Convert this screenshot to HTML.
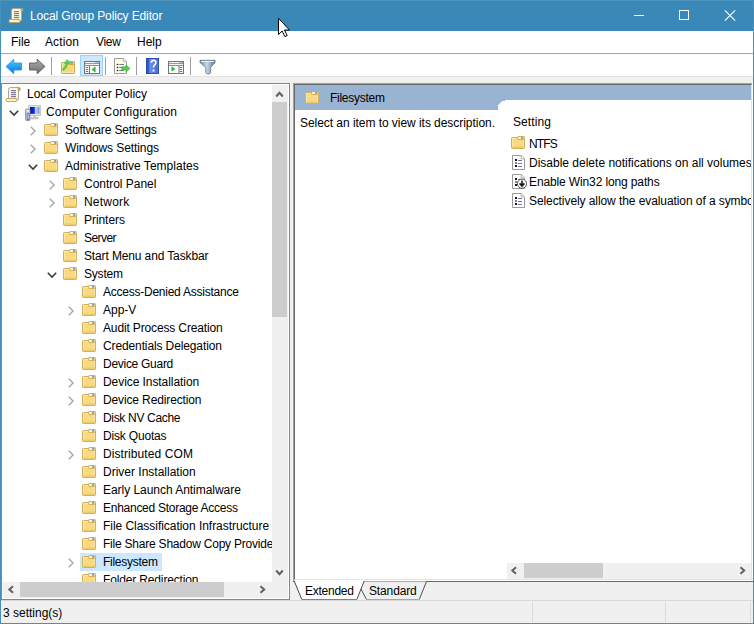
<!DOCTYPE html><html><head><meta charset="utf-8"><style>
*{box-sizing:border-box}
html,body{margin:0;padding:0}
body{width:754px;height:624px;position:relative;overflow:hidden;background:#F0F0F0;font-family:"Liberation Sans",sans-serif;font-size:12px;color:#000}
.a{position:absolute}
.t{position:absolute;white-space:nowrap;line-height:18px;height:18px}
svg{position:absolute;overflow:visible}
</style></head><body>
<div class="a" style="left:0px;top:0px;width:754px;height:31px;background:#3A88B7;"></div>
<div class="a" style="left:0px;top:0px;width:754px;height:1px;background:#4C94C0;"></div>
<div class="a" style="left:0px;top:0px;width:1px;height:624px;background:#4890BC;"></div>
<div class="a" style="left:753px;top:0px;width:1px;height:624px;background:#4890BC;"></div>
<div class="a" style="left:0px;top:623px;width:754px;height:1px;background:#4890BC;"></div>
<svg style="left:8px;top:8px" width="16" height="16" viewBox="0 0 16 16"><g>
<path d="M3.5 2.5 Q3.5 0.5 5.5 0.5 H13.5 Q15.5 0.5 15 2.5 L13.5 3.5 V12.5 H3.5 Z" fill="#FDF6D8" stroke="#A8A8A8"/>
<path d="M12.5 0.8 Q15.5 0.5 15.2 2.8 Q14.5 4 13 3.5" fill="#D4B45C" stroke="#A48A3A" stroke-width="0.8"/>
<rect x="6" y="3" width="5" height="1.2" fill="#7C7CA4"/>
<rect x="6" y="5" width="5" height="1.2" fill="#7C7CA4"/>
<rect x="6" y="7" width="5" height="1.2" fill="#7C7CA4"/>
<rect x="6" y="9" width="5" height="1.2" fill="#7C7CA4"/>
<path d="M1.5 11.5 Q0.2 12.8 1.5 14.5 H11.5 Q13 13 11.5 11.5 Z" fill="#F6EBC2" stroke="#C2A864"/>
<rect x="2.5" y="12.5" width="7" height="1" fill="#FFF8D0"/>
</g></svg>
<div class="t" style="left:30px;top:7px;letter-spacing:-0.125px;color:#fff">Local Group Policy Editor</div>
<div class="a" style="left:634px;top:15px;width:10px;height:1px;background:#fff;"></div>
<div class="a" style="left:679px;top:10px;width:10px;height:10px;border:1px solid #fff"></div>
<svg style="left:724px;top:10px" width="12" height="11" viewBox="0 0 12 11"><path d="M0.8 0.3 L11.2 10.7 M11.2 0.3 L0.8 10.7" stroke="#fff" stroke-width="1.1" fill="none"/></svg>
<div class="a" style="left:1px;top:31px;width:752px;height:22px;background:#fff;"></div>
<div class="a" style="left:1px;top:53px;width:752px;height:1px;background:#ABABAB;"></div>
<div class="t" style="left:11px;top:33px;letter-spacing:-0.033px;">File</div>
<div class="t" style="left:45px;top:33px;letter-spacing:0.100px;">Action</div>
<div class="t" style="left:96px;top:33px;letter-spacing:-0.300px;">View</div>
<div class="t" style="left:137px;top:33px;">Help</div>
<div class="a" style="left:1px;top:54px;width:752px;height:22px;background:#fff;"></div>
<div class="a" style="left:1px;top:54px;width:752px;height:1px;background:#F7F7FC;"></div>
<div class="a" style="left:1px;top:76px;width:752px;height:1px;background:#E3E3E3;"></div>
<svg style="left:0px;top:54px" width="230" height="22" viewBox="0 54 230 22"><defs><linearGradient id="gb" x1="0" y1="0" x2="0" y2="1"><stop offset="0" stop-color="#6BCBFB"/><stop offset="0.45" stop-color="#2AA5F2"/><stop offset="1" stop-color="#0B6FCC"/></linearGradient><linearGradient id="gg" x1="0" y1="0" x2="0" y2="1"><stop offset="0" stop-color="#B0B0B0"/><stop offset="0.5" stop-color="#8E8E8E"/><stop offset="1" stop-color="#707070"/></linearGradient><linearGradient id="gf" x1="0" y1="0" x2="1" y2="0"><stop offset="0" stop-color="#6F8699"/><stop offset="0.45" stop-color="#C9DAE6"/><stop offset="1" stop-color="#5E7487"/></linearGradient><linearGradient id="gh" x1="0" y1="0" x2="1" y2="0"><stop offset="0" stop-color="#6E8FE8"/><stop offset="1" stop-color="#4A6CD6"/></linearGradient></defs><path d="M6 66.5 L13.8 59.2 V63 H21.5 V70 H13.8 V73.8 Z" fill="url(#gb)" stroke="#3A93E0" stroke-width="0.9" stroke-linejoin="round"/><path d="M45 66.5 L37.2 59.2 V63 H29.5 V70 H37.2 V73.8 Z" fill="url(#gg)" stroke="#5A5A5A" stroke-width="0.9" stroke-linejoin="round"/><rect x="51" y="57" width="1" height="18" fill="#A0A0A0"/><rect x="105" y="57" width="1" height="18" fill="#A0A0A0"/><rect x="136" y="57" width="1" height="18" fill="#A0A0A0"/><rect x="190" y="57" width="1" height="18" fill="#A0A0A0"/><rect x="61.5" y="62.5" width="13" height="11" rx="0.8" fill="#F7D77C" stroke="#CDA64E"/><rect x="62.5" y="63.5" width="11" height="9" fill="none" stroke="#FBE7A4" stroke-width="0.9"/><rect x="68.5" y="61.5" width="6" height="3" rx="0.8" fill="#F7D77C" stroke="#CDA64E"/><rect x="70.5" y="62.3" width="2.5" height="1.2" fill="#4A90E2"/><path d="M63.4 69.4 Q66.6 66.8 67.3 62.8" fill="none" stroke="#4ED24E" stroke-width="2.6" stroke-linecap="round"/><path d="M67.1 59.4 L70.6 63.2 L64.3 63.4 Z" fill="#56DA56" stroke="#34B034" stroke-width="0.5"/><rect x="80.5" y="55.5" width="22" height="20" fill="#CCE8FF" stroke="#99D1FF"/><rect x="84.5" y="61.5" width="15" height="12" fill="#FFFFFF" stroke="#6F757E"/><rect x="85" y="62" width="14" height="1.2" fill="#F4F4F4"/><rect x="85" y="63.2" width="14" height="0.9" fill="#7E848C"/><rect x="85" y="64.1" width="14" height="1" fill="#F4F4F4"/><rect x="85" y="65.1" width="14" height="0.9" fill="#7E848C"/><rect x="95.5" y="62" width="1" height="1.2" fill="#7E848C"/><rect x="97.5" y="62" width="1" height="1.2" fill="#7E848C"/><rect x="89" y="66" width="1" height="7.5" fill="#6F757E"/><rect x="85.8" y="67" width="2.4" height="1" fill="#3A78C8"/><rect x="85.8" y="69" width="2.4" height="1" fill="#3A78C8"/><rect x="85.8" y="71" width="2.4" height="1" fill="#3A78C8"/><path d="M91.9 69.5 L95.2 66.9 V72.1 Z" fill="#3CB83C" stroke="#2FA52F" stroke-width="0.6" stroke-linejoin="round"/><rect x="96.5" y="66" width="0.8" height="7" fill="#EDEDED"/><path d="M114.5 58.5 H123.3 L126.5 61.7 V73.5 H114.5 Z" fill="#FFF8E2" stroke="#9C9C9C"/><path d="M123.3 58.5 V61.7 H126.5" fill="#F0F0F0" stroke="#B4B4B4" stroke-width="0.8"/><circle cx="117.5" cy="64.5" r="0.8" fill="#202020"/><circle cx="117.5" cy="67.5" r="0.8" fill="#202020"/><circle cx="117.5" cy="70.5" r="0.8" fill="#202020"/><rect x="119.2" y="64" width="4.8" height="1" fill="#7A78A8"/><rect x="119.2" y="67" width="4.8" height="1" fill="#7A78A8"/><rect x="119.2" y="70" width="4.8" height="1" fill="#7A78A8"/><path d="M121.8 66.8 H126 V64.8 L130 68.4 L126 72.2 V69.9 H121.8 Z" fill="#52D052" stroke="#36AF36" stroke-width="0.6" stroke-linejoin="round"/><rect x="146" y="58" width="13" height="16" fill="#2242A8"/><rect x="146.6" y="58.6" width="2.6" height="14.8" fill="#3358C8"/><rect x="149.2" y="58.8" width="9.2" height="14.4" fill="url(#gh)"/><path d="M151.2 62.7 Q151.3 60.4 153.6 60.4 Q155.9 60.4 155.9 62.5 Q155.9 63.9 154.6 64.8 Q153.5 65.6 153.5 67.6" fill="none" stroke="#FFFFFF" stroke-width="1.6"/><rect x="152.6" y="69.6" width="1.9" height="1.9" fill="#FFFFFF"/><rect x="168.5" y="61.5" width="15" height="12" fill="#FFFFFF" stroke="#6F757E"/><rect x="169" y="62" width="14" height="1.2" fill="#F4F4F4"/><rect x="169" y="63.2" width="14" height="0.9" fill="#7E848C"/><rect x="169" y="64.1" width="14" height="1" fill="#F4F4F4"/><rect x="169" y="65.1" width="14" height="0.9" fill="#7E848C"/><rect x="179.5" y="62" width="1" height="1.2" fill="#7E848C"/><rect x="181.5" y="62" width="1" height="1.2" fill="#7E848C"/><rect x="178.5" y="66" width="1" height="7.5" fill="#6F757E"/><rect x="179.8" y="67" width="2.4" height="1" fill="#3A78C8"/><rect x="179.8" y="69" width="2.4" height="1" fill="#3A78C8"/><rect x="179.8" y="71" width="2.4" height="1" fill="#3A78C8"/><path d="M171.8 66.8 L175 69 L171.8 71.1 Z" fill="#3CB83C" stroke="#2FA52F" stroke-width="0.6" stroke-linejoin="round"/><path d="M200 60.3 H215 V62.6 L210.6 67.6 V72.6 Q210.6 73.9 208.3 73.9 Q205.8 73.9 205.8 72.6 V67.6 L200 62.6 Z" fill="url(#gf)" stroke="#5F7488" stroke-width="0.8" stroke-linejoin="round"/><rect x="201" y="61" width="13" height="1" fill="#E8F2F8"/></svg>
<div class="a" style="left:1px;top:83px;width:289px;height:517px;border:1px solid #828790;background:#fff"></div>
<div class="a" style="left:3px;top:85px;width:269px;height:497px;overflow:hidden">
<svg style="left:2px;top:2px" width="16" height="16" viewBox="0 0 16 16"><g>
<path d="M3.5 2.5 Q3.5 0.5 5.5 0.5 H13.5 Q15.5 0.5 15 2.5 L13.5 3.5 V12.5 H3.5 Z" fill="#FDF6D8" stroke="#A8A8A8"/>
<path d="M12.5 0.8 Q15.5 0.5 15.2 2.8 Q14.5 4 13 3.5" fill="#D4B45C" stroke="#A48A3A" stroke-width="0.8"/>
<rect x="6" y="3" width="5" height="1.2" fill="#7C7CA4"/>
<rect x="6" y="5" width="5" height="1.2" fill="#7C7CA4"/>
<rect x="6" y="7" width="5" height="1.2" fill="#7C7CA4"/>
<rect x="6" y="9" width="5" height="1.2" fill="#7C7CA4"/>
<path d="M1.5 11.5 Q0.2 12.8 1.5 14.5 H11.5 Q13 13 11.5 11.5 Z" fill="#F6EBC2" stroke="#C2A864"/>
<rect x="2.5" y="12.5" width="7" height="1" fill="#FFF8D0"/>
</g></svg>
<div class="t" style="left:24px;top:0px;">Local Computer Policy</div>
<svg style="left:5.5px;top:24.7px" width="10" height="6" viewBox="0 0 10 6"><polyline points="0.8,0.8 5,5 9.2,0.8" fill="none" stroke="#3A3A3A" stroke-width="1.6"/></svg>
<svg style="left:22px;top:20px" width="16" height="16" viewBox="0 0 16 16">
<defs><linearGradient id="scr" x1="0" y1="0" x2="1" y2="0"><stop offset="0" stop-color="#0008B8"/><stop offset="0.45" stop-color="#1030E0"/><stop offset="0.6" stop-color="#C8D8FF"/><stop offset="1" stop-color="#6A90F0"/></linearGradient></defs>
<rect x="3.6" y="0.6" width="12" height="10" fill="#E4E4DA" stroke="#C4C4B4" stroke-width="0.9"/>
<rect x="5" y="2" width="9.4" height="6.8" fill="url(#scr)"/>
<rect x="8.5" y="11" width="2.2" height="1.5" fill="#B8B8B0"/>
<rect x="6.2" y="12.4" width="7" height="1.6" fill="#CFCFC8" stroke="#B0B0A8" stroke-width="0.5"/>
<rect x="0.6" y="4.2" width="4.4" height="11.2" rx="0.6" fill="#C8C8C8" stroke="#8C8C8C" stroke-width="0.9"/>
<rect x="1.6" y="5" width="2.6" height="2" fill="#E8E8E8"/>
<rect x="1.8" y="8.2" width="2.6" height="7" rx="1" fill="#3E70C0"/>
<rect x="2.6" y="9.2" width="1" height="5" fill="#D8ECFF"/>
</svg>
<div class="t" style="left:43px;top:18px;letter-spacing:0.171px;">Computer Configuration</div>
<svg style="left:26.700000000000003px;top:40.6px" width="7" height="10" viewBox="0 0 7 10"><polyline points="0.8,0.8 5,5 0.8,9.2" fill="none" stroke="#A6A6A6" stroke-width="1.4"/></svg>
<svg class="a" style="left:41px;top:38px" width="14" height="13" viewBox="0 0 14 13"><g>
<rect x="0.5" y="1.5" width="13" height="11" rx="0.8" fill="#F8DA84" stroke="#D3AF5C"/>
<rect x="1.5" y="2.5" width="11" height="9" fill="none" stroke="#FBE7A4" stroke-width="0.9"/>
<rect x="6.5" y="0.5" width="7" height="3" rx="0.8" fill="#F8DA84" stroke="#D3AF5C"/>
<rect x="7.3" y="1.3" width="2.8" height="1.3" fill="#FFFFFF"/>
<rect x="10" y="1.3" width="2.3" height="1.3" rx="0.6" fill="#2E86F2"/>
<rect x="1" y="10.5" width="12" height="1.5" fill="#EFCB6A"/>
</g></svg>
<div class="t" style="left:62px;top:36px;letter-spacing:-0.144px;">Software Settings</div>
<svg style="left:26.700000000000003px;top:58.6px" width="7" height="10" viewBox="0 0 7 10"><polyline points="0.8,0.8 5,5 0.8,9.2" fill="none" stroke="#A6A6A6" stroke-width="1.4"/></svg>
<svg class="a" style="left:41px;top:56px" width="14" height="13" viewBox="0 0 14 13"><g>
<rect x="0.5" y="1.5" width="13" height="11" rx="0.8" fill="#F8DA84" stroke="#D3AF5C"/>
<rect x="1.5" y="2.5" width="11" height="9" fill="none" stroke="#FBE7A4" stroke-width="0.9"/>
<rect x="6.5" y="0.5" width="7" height="3" rx="0.8" fill="#F8DA84" stroke="#D3AF5C"/>
<rect x="7.3" y="1.3" width="2.8" height="1.3" fill="#FFFFFF"/>
<rect x="10" y="1.3" width="2.3" height="1.3" rx="0.6" fill="#2E86F2"/>
<rect x="1" y="10.5" width="12" height="1.5" fill="#EFCB6A"/>
</g></svg>
<div class="t" style="left:62px;top:54px;letter-spacing:-0.093px;">Windows Settings</div>
<svg style="left:24.5px;top:78.7px" width="10" height="6" viewBox="0 0 10 6"><polyline points="0.8,0.8 5,5 9.2,0.8" fill="none" stroke="#3A3A3A" stroke-width="1.6"/></svg>
<svg class="a" style="left:41px;top:74px" width="14" height="13" viewBox="0 0 14 13"><g>
<rect x="0.5" y="1.5" width="13" height="11" rx="0.8" fill="#F8DA84" stroke="#D3AF5C"/>
<rect x="1.5" y="2.5" width="11" height="9" fill="none" stroke="#FBE7A4" stroke-width="0.9"/>
<rect x="6.5" y="0.5" width="7" height="3" rx="0.8" fill="#F8DA84" stroke="#D3AF5C"/>
<rect x="7.3" y="1.3" width="2.8" height="1.3" fill="#FFFFFF"/>
<rect x="10" y="1.3" width="2.3" height="1.3" rx="0.6" fill="#2E86F2"/>
<rect x="1" y="10.5" width="12" height="1.5" fill="#EFCB6A"/>
</g></svg>
<div class="t" style="left:62px;top:72px;letter-spacing:0.026px;">Administrative Templates</div>
<svg style="left:45.7px;top:94.6px" width="7" height="10" viewBox="0 0 7 10"><polyline points="0.8,0.8 5,5 0.8,9.2" fill="none" stroke="#A6A6A6" stroke-width="1.4"/></svg>
<svg class="a" style="left:60px;top:92px" width="14" height="13" viewBox="0 0 14 13"><g>
<rect x="0.5" y="1.5" width="13" height="11" rx="0.8" fill="#F8DA84" stroke="#D3AF5C"/>
<rect x="1.5" y="2.5" width="11" height="9" fill="none" stroke="#FBE7A4" stroke-width="0.9"/>
<rect x="6.5" y="0.5" width="7" height="3" rx="0.8" fill="#F8DA84" stroke="#D3AF5C"/>
<rect x="7.3" y="1.3" width="2.8" height="1.3" fill="#FFFFFF"/>
<rect x="10" y="1.3" width="2.3" height="1.3" rx="0.6" fill="#2E86F2"/>
<rect x="1" y="10.5" width="12" height="1.5" fill="#EFCB6A"/>
</g></svg>
<div class="t" style="left:81px;top:90px;letter-spacing:-0.025px;">Control Panel</div>
<svg style="left:45.7px;top:112.6px" width="7" height="10" viewBox="0 0 7 10"><polyline points="0.8,0.8 5,5 0.8,9.2" fill="none" stroke="#A6A6A6" stroke-width="1.4"/></svg>
<svg class="a" style="left:60px;top:110px" width="14" height="13" viewBox="0 0 14 13"><g>
<rect x="0.5" y="1.5" width="13" height="11" rx="0.8" fill="#F8DA84" stroke="#D3AF5C"/>
<rect x="1.5" y="2.5" width="11" height="9" fill="none" stroke="#FBE7A4" stroke-width="0.9"/>
<rect x="6.5" y="0.5" width="7" height="3" rx="0.8" fill="#F8DA84" stroke="#D3AF5C"/>
<rect x="7.3" y="1.3" width="2.8" height="1.3" fill="#FFFFFF"/>
<rect x="10" y="1.3" width="2.3" height="1.3" rx="0.6" fill="#2E86F2"/>
<rect x="1" y="10.5" width="12" height="1.5" fill="#EFCB6A"/>
</g></svg>
<div class="t" style="left:81px;top:108px;letter-spacing:0.200px;">Network</div>
<svg class="a" style="left:60px;top:128px" width="14" height="13" viewBox="0 0 14 13"><g>
<rect x="0.5" y="1.5" width="13" height="11" rx="0.8" fill="#F8DA84" stroke="#D3AF5C"/>
<rect x="1.5" y="2.5" width="11" height="9" fill="none" stroke="#FBE7A4" stroke-width="0.9"/>
<rect x="6.5" y="0.5" width="7" height="3" rx="0.8" fill="#F8DA84" stroke="#D3AF5C"/>
<rect x="7.3" y="1.3" width="2.8" height="1.3" fill="#FFFFFF"/>
<rect x="10" y="1.3" width="2.3" height="1.3" rx="0.6" fill="#2E86F2"/>
<rect x="1" y="10.5" width="12" height="1.5" fill="#EFCB6A"/>
</g></svg>
<div class="t" style="left:81px;top:126px;letter-spacing:-0.057px;">Printers</div>
<svg class="a" style="left:60px;top:146px" width="14" height="13" viewBox="0 0 14 13"><g>
<rect x="0.5" y="1.5" width="13" height="11" rx="0.8" fill="#F8DA84" stroke="#D3AF5C"/>
<rect x="1.5" y="2.5" width="11" height="9" fill="none" stroke="#FBE7A4" stroke-width="0.9"/>
<rect x="6.5" y="0.5" width="7" height="3" rx="0.8" fill="#F8DA84" stroke="#D3AF5C"/>
<rect x="7.3" y="1.3" width="2.8" height="1.3" fill="#FFFFFF"/>
<rect x="10" y="1.3" width="2.3" height="1.3" rx="0.6" fill="#2E86F2"/>
<rect x="1" y="10.5" width="12" height="1.5" fill="#EFCB6A"/>
</g></svg>
<div class="t" style="left:81px;top:144px;letter-spacing:-0.560px;">Server</div>
<svg class="a" style="left:60px;top:164px" width="14" height="13" viewBox="0 0 14 13"><g>
<rect x="0.5" y="1.5" width="13" height="11" rx="0.8" fill="#F8DA84" stroke="#D3AF5C"/>
<rect x="1.5" y="2.5" width="11" height="9" fill="none" stroke="#FBE7A4" stroke-width="0.9"/>
<rect x="6.5" y="0.5" width="7" height="3" rx="0.8" fill="#F8DA84" stroke="#D3AF5C"/>
<rect x="7.3" y="1.3" width="2.8" height="1.3" fill="#FFFFFF"/>
<rect x="10" y="1.3" width="2.3" height="1.3" rx="0.6" fill="#2E86F2"/>
<rect x="1" y="10.5" width="12" height="1.5" fill="#EFCB6A"/>
</g></svg>
<div class="t" style="left:81px;top:162px;letter-spacing:-0.129px;">Start Menu and Taskbar</div>
<svg style="left:43.5px;top:186.7px" width="10" height="6" viewBox="0 0 10 6"><polyline points="0.8,0.8 5,5 9.2,0.8" fill="none" stroke="#3A3A3A" stroke-width="1.6"/></svg>
<svg class="a" style="left:60px;top:182px" width="14" height="13" viewBox="0 0 14 13"><g>
<rect x="0.5" y="1.5" width="13" height="11" rx="0.8" fill="#F8DA84" stroke="#D3AF5C"/>
<rect x="1.5" y="2.5" width="11" height="9" fill="none" stroke="#FBE7A4" stroke-width="0.9"/>
<rect x="6.5" y="0.5" width="7" height="3" rx="0.8" fill="#F8DA84" stroke="#D3AF5C"/>
<rect x="7.3" y="1.3" width="2.8" height="1.3" fill="#FFFFFF"/>
<rect x="10" y="1.3" width="2.3" height="1.3" rx="0.6" fill="#2E86F2"/>
<rect x="1" y="10.5" width="12" height="1.5" fill="#EFCB6A"/>
</g></svg>
<div class="t" style="left:81px;top:180px;letter-spacing:-0.200px;">System</div>
<svg class="a" style="left:79px;top:200px" width="14" height="13" viewBox="0 0 14 13"><g>
<rect x="0.5" y="1.5" width="13" height="11" rx="0.8" fill="#F8DA84" stroke="#D3AF5C"/>
<rect x="1.5" y="2.5" width="11" height="9" fill="none" stroke="#FBE7A4" stroke-width="0.9"/>
<rect x="6.5" y="0.5" width="7" height="3" rx="0.8" fill="#F8DA84" stroke="#D3AF5C"/>
<rect x="7.3" y="1.3" width="2.8" height="1.3" fill="#FFFFFF"/>
<rect x="10" y="1.3" width="2.3" height="1.3" rx="0.6" fill="#2E86F2"/>
<rect x="1" y="10.5" width="12" height="1.5" fill="#EFCB6A"/>
</g></svg>
<div class="t" style="left:100px;top:198px;letter-spacing:-0.243px;">Access-Denied Assistance</div>
<svg style="left:64.7px;top:220.6px" width="7" height="10" viewBox="0 0 7 10"><polyline points="0.8,0.8 5,5 0.8,9.2" fill="none" stroke="#A6A6A6" stroke-width="1.4"/></svg>
<svg class="a" style="left:79px;top:218px" width="14" height="13" viewBox="0 0 14 13"><g>
<rect x="0.5" y="1.5" width="13" height="11" rx="0.8" fill="#F8DA84" stroke="#D3AF5C"/>
<rect x="1.5" y="2.5" width="11" height="9" fill="none" stroke="#FBE7A4" stroke-width="0.9"/>
<rect x="6.5" y="0.5" width="7" height="3" rx="0.8" fill="#F8DA84" stroke="#D3AF5C"/>
<rect x="7.3" y="1.3" width="2.8" height="1.3" fill="#FFFFFF"/>
<rect x="10" y="1.3" width="2.3" height="1.3" rx="0.6" fill="#2E86F2"/>
<rect x="1" y="10.5" width="12" height="1.5" fill="#EFCB6A"/>
</g></svg>
<div class="t" style="left:100px;top:216px;">App-V</div>
<svg class="a" style="left:79px;top:236px" width="14" height="13" viewBox="0 0 14 13"><g>
<rect x="0.5" y="1.5" width="13" height="11" rx="0.8" fill="#F8DA84" stroke="#D3AF5C"/>
<rect x="1.5" y="2.5" width="11" height="9" fill="none" stroke="#FBE7A4" stroke-width="0.9"/>
<rect x="6.5" y="0.5" width="7" height="3" rx="0.8" fill="#F8DA84" stroke="#D3AF5C"/>
<rect x="7.3" y="1.3" width="2.8" height="1.3" fill="#FFFFFF"/>
<rect x="10" y="1.3" width="2.3" height="1.3" rx="0.6" fill="#2E86F2"/>
<rect x="1" y="10.5" width="12" height="1.5" fill="#EFCB6A"/>
</g></svg>
<div class="t" style="left:100px;top:234px;letter-spacing:-0.143px;">Audit Process Creation</div>
<svg class="a" style="left:79px;top:254px" width="14" height="13" viewBox="0 0 14 13"><g>
<rect x="0.5" y="1.5" width="13" height="11" rx="0.8" fill="#F8DA84" stroke="#D3AF5C"/>
<rect x="1.5" y="2.5" width="11" height="9" fill="none" stroke="#FBE7A4" stroke-width="0.9"/>
<rect x="6.5" y="0.5" width="7" height="3" rx="0.8" fill="#F8DA84" stroke="#D3AF5C"/>
<rect x="7.3" y="1.3" width="2.8" height="1.3" fill="#FFFFFF"/>
<rect x="10" y="1.3" width="2.3" height="1.3" rx="0.6" fill="#2E86F2"/>
<rect x="1" y="10.5" width="12" height="1.5" fill="#EFCB6A"/>
</g></svg>
<div class="t" style="left:100px;top:252px;letter-spacing:-0.119px;">Credentials Delegation</div>
<svg class="a" style="left:79px;top:272px" width="14" height="13" viewBox="0 0 14 13"><g>
<rect x="0.5" y="1.5" width="13" height="11" rx="0.8" fill="#F8DA84" stroke="#D3AF5C"/>
<rect x="1.5" y="2.5" width="11" height="9" fill="none" stroke="#FBE7A4" stroke-width="0.9"/>
<rect x="6.5" y="0.5" width="7" height="3" rx="0.8" fill="#F8DA84" stroke="#D3AF5C"/>
<rect x="7.3" y="1.3" width="2.8" height="1.3" fill="#FFFFFF"/>
<rect x="10" y="1.3" width="2.3" height="1.3" rx="0.6" fill="#2E86F2"/>
<rect x="1" y="10.5" width="12" height="1.5" fill="#EFCB6A"/>
</g></svg>
<div class="t" style="left:100px;top:270px;letter-spacing:-0.282px;">Device Guard</div>
<svg style="left:64.7px;top:292.6px" width="7" height="10" viewBox="0 0 7 10"><polyline points="0.8,0.8 5,5 0.8,9.2" fill="none" stroke="#A6A6A6" stroke-width="1.4"/></svg>
<svg class="a" style="left:79px;top:290px" width="14" height="13" viewBox="0 0 14 13"><g>
<rect x="0.5" y="1.5" width="13" height="11" rx="0.8" fill="#F8DA84" stroke="#D3AF5C"/>
<rect x="1.5" y="2.5" width="11" height="9" fill="none" stroke="#FBE7A4" stroke-width="0.9"/>
<rect x="6.5" y="0.5" width="7" height="3" rx="0.8" fill="#F8DA84" stroke="#D3AF5C"/>
<rect x="7.3" y="1.3" width="2.8" height="1.3" fill="#FFFFFF"/>
<rect x="10" y="1.3" width="2.3" height="1.3" rx="0.6" fill="#2E86F2"/>
<rect x="1" y="10.5" width="12" height="1.5" fill="#EFCB6A"/>
</g></svg>
<div class="t" style="left:100px;top:288px;letter-spacing:-0.067px;">Device Installation</div>
<svg style="left:64.7px;top:310.6px" width="7" height="10" viewBox="0 0 7 10"><polyline points="0.8,0.8 5,5 0.8,9.2" fill="none" stroke="#A6A6A6" stroke-width="1.4"/></svg>
<svg class="a" style="left:79px;top:308px" width="14" height="13" viewBox="0 0 14 13"><g>
<rect x="0.5" y="1.5" width="13" height="11" rx="0.8" fill="#F8DA84" stroke="#D3AF5C"/>
<rect x="1.5" y="2.5" width="11" height="9" fill="none" stroke="#FBE7A4" stroke-width="0.9"/>
<rect x="6.5" y="0.5" width="7" height="3" rx="0.8" fill="#F8DA84" stroke="#D3AF5C"/>
<rect x="7.3" y="1.3" width="2.8" height="1.3" fill="#FFFFFF"/>
<rect x="10" y="1.3" width="2.3" height="1.3" rx="0.6" fill="#2E86F2"/>
<rect x="1" y="10.5" width="12" height="1.5" fill="#EFCB6A"/>
</g></svg>
<div class="t" style="left:100px;top:306px;letter-spacing:-0.129px;">Device Redirection</div>
<svg class="a" style="left:79px;top:326px" width="14" height="13" viewBox="0 0 14 13"><g>
<rect x="0.5" y="1.5" width="13" height="11" rx="0.8" fill="#F8DA84" stroke="#D3AF5C"/>
<rect x="1.5" y="2.5" width="11" height="9" fill="none" stroke="#FBE7A4" stroke-width="0.9"/>
<rect x="6.5" y="0.5" width="7" height="3" rx="0.8" fill="#F8DA84" stroke="#D3AF5C"/>
<rect x="7.3" y="1.3" width="2.8" height="1.3" fill="#FFFFFF"/>
<rect x="10" y="1.3" width="2.3" height="1.3" rx="0.6" fill="#2E86F2"/>
<rect x="1" y="10.5" width="12" height="1.5" fill="#EFCB6A"/>
</g></svg>
<div class="t" style="left:100px;top:324px;letter-spacing:-0.325px;">Disk NV Cache</div>
<svg class="a" style="left:79px;top:344px" width="14" height="13" viewBox="0 0 14 13"><g>
<rect x="0.5" y="1.5" width="13" height="11" rx="0.8" fill="#F8DA84" stroke="#D3AF5C"/>
<rect x="1.5" y="2.5" width="11" height="9" fill="none" stroke="#FBE7A4" stroke-width="0.9"/>
<rect x="6.5" y="0.5" width="7" height="3" rx="0.8" fill="#F8DA84" stroke="#D3AF5C"/>
<rect x="7.3" y="1.3" width="2.8" height="1.3" fill="#FFFFFF"/>
<rect x="10" y="1.3" width="2.3" height="1.3" rx="0.6" fill="#2E86F2"/>
<rect x="1" y="10.5" width="12" height="1.5" fill="#EFCB6A"/>
</g></svg>
<div class="t" style="left:100px;top:342px;letter-spacing:-0.180px;">Disk Quotas</div>
<svg style="left:64.7px;top:364.6px" width="7" height="10" viewBox="0 0 7 10"><polyline points="0.8,0.8 5,5 0.8,9.2" fill="none" stroke="#A6A6A6" stroke-width="1.4"/></svg>
<svg class="a" style="left:79px;top:362px" width="14" height="13" viewBox="0 0 14 13"><g>
<rect x="0.5" y="1.5" width="13" height="11" rx="0.8" fill="#F8DA84" stroke="#D3AF5C"/>
<rect x="1.5" y="2.5" width="11" height="9" fill="none" stroke="#FBE7A4" stroke-width="0.9"/>
<rect x="6.5" y="0.5" width="7" height="3" rx="0.8" fill="#F8DA84" stroke="#D3AF5C"/>
<rect x="7.3" y="1.3" width="2.8" height="1.3" fill="#FFFFFF"/>
<rect x="10" y="1.3" width="2.3" height="1.3" rx="0.6" fill="#2E86F2"/>
<rect x="1" y="10.5" width="12" height="1.5" fill="#EFCB6A"/>
</g></svg>
<div class="t" style="left:100px;top:360px;letter-spacing:0.086px;">Distributed COM</div>
<svg class="a" style="left:79px;top:380px" width="14" height="13" viewBox="0 0 14 13"><g>
<rect x="0.5" y="1.5" width="13" height="11" rx="0.8" fill="#F8DA84" stroke="#D3AF5C"/>
<rect x="1.5" y="2.5" width="11" height="9" fill="none" stroke="#FBE7A4" stroke-width="0.9"/>
<rect x="6.5" y="0.5" width="7" height="3" rx="0.8" fill="#F8DA84" stroke="#D3AF5C"/>
<rect x="7.3" y="1.3" width="2.8" height="1.3" fill="#FFFFFF"/>
<rect x="10" y="1.3" width="2.3" height="1.3" rx="0.6" fill="#2E86F2"/>
<rect x="1" y="10.5" width="12" height="1.5" fill="#EFCB6A"/>
</g></svg>
<div class="t" style="left:100px;top:378px;">Driver Installation</div>
<svg class="a" style="left:79px;top:398px" width="14" height="13" viewBox="0 0 14 13"><g>
<rect x="0.5" y="1.5" width="13" height="11" rx="0.8" fill="#F8DA84" stroke="#D3AF5C"/>
<rect x="1.5" y="2.5" width="11" height="9" fill="none" stroke="#FBE7A4" stroke-width="0.9"/>
<rect x="6.5" y="0.5" width="7" height="3" rx="0.8" fill="#F8DA84" stroke="#D3AF5C"/>
<rect x="7.3" y="1.3" width="2.8" height="1.3" fill="#FFFFFF"/>
<rect x="10" y="1.3" width="2.3" height="1.3" rx="0.6" fill="#2E86F2"/>
<rect x="1" y="10.5" width="12" height="1.5" fill="#EFCB6A"/>
</g></svg>
<div class="t" style="left:100px;top:396px;letter-spacing:-0.039px;">Early Launch Antimalware</div>
<svg class="a" style="left:79px;top:416px" width="14" height="13" viewBox="0 0 14 13"><g>
<rect x="0.5" y="1.5" width="13" height="11" rx="0.8" fill="#F8DA84" stroke="#D3AF5C"/>
<rect x="1.5" y="2.5" width="11" height="9" fill="none" stroke="#FBE7A4" stroke-width="0.9"/>
<rect x="6.5" y="0.5" width="7" height="3" rx="0.8" fill="#F8DA84" stroke="#D3AF5C"/>
<rect x="7.3" y="1.3" width="2.8" height="1.3" fill="#FFFFFF"/>
<rect x="10" y="1.3" width="2.3" height="1.3" rx="0.6" fill="#2E86F2"/>
<rect x="1" y="10.5" width="12" height="1.5" fill="#EFCB6A"/>
</g></svg>
<div class="t" style="left:100px;top:414px;letter-spacing:-0.264px;">Enhanced Storage Access</div>
<svg class="a" style="left:79px;top:434px" width="14" height="13" viewBox="0 0 14 13"><g>
<rect x="0.5" y="1.5" width="13" height="11" rx="0.8" fill="#F8DA84" stroke="#D3AF5C"/>
<rect x="1.5" y="2.5" width="11" height="9" fill="none" stroke="#FBE7A4" stroke-width="0.9"/>
<rect x="6.5" y="0.5" width="7" height="3" rx="0.8" fill="#F8DA84" stroke="#D3AF5C"/>
<rect x="7.3" y="1.3" width="2.8" height="1.3" fill="#FFFFFF"/>
<rect x="10" y="1.3" width="2.3" height="1.3" rx="0.6" fill="#2E86F2"/>
<rect x="1" y="10.5" width="12" height="1.5" fill="#EFCB6A"/>
</g></svg>
<div class="t" style="left:100px;top:432px;letter-spacing:-0.039px;">File Classification Infrastructure</div>
<svg class="a" style="left:79px;top:452px" width="14" height="13" viewBox="0 0 14 13"><g>
<rect x="0.5" y="1.5" width="13" height="11" rx="0.8" fill="#F8DA84" stroke="#D3AF5C"/>
<rect x="1.5" y="2.5" width="11" height="9" fill="none" stroke="#FBE7A4" stroke-width="0.9"/>
<rect x="6.5" y="0.5" width="7" height="3" rx="0.8" fill="#F8DA84" stroke="#D3AF5C"/>
<rect x="7.3" y="1.3" width="2.8" height="1.3" fill="#FFFFFF"/>
<rect x="10" y="1.3" width="2.3" height="1.3" rx="0.6" fill="#2E86F2"/>
<rect x="1" y="10.5" width="12" height="1.5" fill="#EFCB6A"/>
</g></svg>
<div class="t" style="left:100px;top:450px;letter-spacing:-0.220px;">File Share Shadow Copy Provider</div>
<div class="a" style="left:77px;top:468px;width:82px;height:18px;background:#CCE8FF;"></div>
<svg style="left:64.7px;top:472.6px" width="7" height="10" viewBox="0 0 7 10"><polyline points="0.8,0.8 5,5 0.8,9.2" fill="none" stroke="#A6A6A6" stroke-width="1.4"/></svg>
<svg class="a" style="left:79px;top:470px" width="14" height="13" viewBox="0 0 14 13"><g>
<rect x="0.5" y="1.5" width="13" height="11" rx="0.8" fill="#F8DA84" stroke="#D3AF5C"/>
<rect x="1.5" y="2.5" width="11" height="9" fill="none" stroke="#FBE7A4" stroke-width="0.9"/>
<rect x="6.5" y="0.5" width="7" height="3" rx="0.8" fill="#F8DA84" stroke="#D3AF5C"/>
<rect x="7.3" y="1.3" width="2.8" height="1.3" fill="#FFFFFF"/>
<rect x="10" y="1.3" width="2.3" height="1.3" rx="0.6" fill="#2E86F2"/>
<rect x="1" y="10.5" width="12" height="1.5" fill="#EFCB6A"/>
</g></svg>
<div class="t" style="left:100px;top:468px;letter-spacing:-0.267px;">Filesystem</div>
<svg class="a" style="left:79px;top:488px" width="14" height="13" viewBox="0 0 14 13"><g>
<rect x="0.5" y="1.5" width="13" height="11" rx="0.8" fill="#F8DA84" stroke="#D3AF5C"/>
<rect x="1.5" y="2.5" width="11" height="9" fill="none" stroke="#FBE7A4" stroke-width="0.9"/>
<rect x="6.5" y="0.5" width="7" height="3" rx="0.8" fill="#F8DA84" stroke="#D3AF5C"/>
<rect x="7.3" y="1.3" width="2.8" height="1.3" fill="#FFFFFF"/>
<rect x="10" y="1.3" width="2.3" height="1.3" rx="0.6" fill="#2E86F2"/>
<rect x="1" y="10.5" width="12" height="1.5" fill="#EFCB6A"/>
</g></svg>
<div class="t" style="left:100px;top:486px;letter-spacing:-0.150px;">Folder Redirection</div>
</div>
<div class="a" style="left:272px;top:85px;width:16px;height:497px;background:#F0F0F0;"></div>
<div class="a" style="left:272px;top:102px;width:15px;height:215px;background:#CDCDCD;"></div>
<svg style="left:275px;top:90px" width="10" height="8" viewBox="0 0 10 8"><polyline points="1.2,6.5 4.5,2.8 7.8,6.5" fill="none" stroke="#606060" stroke-width="2"/></svg>
<svg style="left:275px;top:569px" width="10" height="8" viewBox="0 0 10 8"><polyline points="1.2,1.5 4.5,5.2 7.8,1.5" fill="none" stroke="#606060" stroke-width="2"/></svg>
<div class="a" style="left:3px;top:582px;width:269px;height:16px;background:#F0F0F0;"></div>
<div class="a" style="left:20px;top:582px;width:204px;height:15px;background:#CDCDCD;"></div>
<svg style="left:7px;top:585px" width="8" height="10" viewBox="0 0 8 10"><polyline points="6,1.2 2.3,4.5 6,7.8" fill="none" stroke="#606060" stroke-width="2"/></svg>
<svg style="left:259px;top:585px" width="8" height="10" viewBox="0 0 8 10"><polyline points="1.5,1.2 5.2,4.5 1.5,7.8" fill="none" stroke="#606060" stroke-width="2"/></svg>
<div class="a" style="left:272px;top:582px;width:16px;height:16px;background:#F0F0F0;"></div>
<div class="a" style="left:293px;top:83px;width:460px;height:498px;background:#fff;border-top:1px solid #A0A0A0;border-left:1px solid #A0A0A0;border-right:1px solid #fff;border-bottom:1px solid #fff"></div>
<div class="a" style="left:294px;top:84px;width:458px;height:496px;border-top:1px solid #696969;border-left:1px solid #696969;border-right:1px solid #E3E3E3;border-bottom:1px solid #E3E3E3"></div>
<div class="a" style="left:295px;top:85px;width:456px;height:25px;background:#99B4D2;"></div>
<svg style="left:495px;top:98px" width="260" height="14" viewBox="495 98 260 14"><path d="M497.5 110.5 V105.2 L502.2 100.5 H505 V100 H751 V110.5 Z" fill="#fff"/><path d="M497.5 110 V105.2 L502.2 100.5 H505" fill="none" stroke="#8AA8CA" stroke-width="0.8"/></svg>
<svg class="a" style="left:305px;top:91px" width="14" height="13" viewBox="0 0 14 13"><g>
<rect x="0.5" y="1.5" width="13" height="11" rx="0.8" fill="#F8DA84" stroke="#D3AF5C"/>
<rect x="1.5" y="2.5" width="11" height="9" fill="none" stroke="#FBE7A4" stroke-width="0.9"/>
<rect x="6.5" y="0.5" width="7" height="3" rx="0.8" fill="#F8DA84" stroke="#D3AF5C"/>
<rect x="7.3" y="1.3" width="2.8" height="1.3" fill="#FFFFFF"/>
<rect x="10" y="1.3" width="2.3" height="1.3" rx="0.6" fill="#2E86F2"/>
<rect x="1" y="10.5" width="12" height="1.5" fill="#EFCB6A"/>
</g></svg>
<div class="t" style="left:330px;top:89px;letter-spacing:-0.267px;">Filesystem</div>
<div class="t" style="left:300px;top:114px;letter-spacing:-0.047px;">Select an item to view its description.</div>
<div class="a" style="left:0;top:0;width:751px;height:563px;overflow:hidden">
<div class="t" style="left:513px;top:113px;letter-spacing:0.083px;">Setting</div>
<svg class="a" style="left:511px;top:136px" width="14" height="13" viewBox="0 0 14 13"><g>
<rect x="0.5" y="1.5" width="13" height="11" rx="0.8" fill="#F8DA84" stroke="#D3AF5C"/>
<rect x="1.5" y="2.5" width="11" height="9" fill="none" stroke="#FBE7A4" stroke-width="0.9"/>
<rect x="6.5" y="0.5" width="7" height="3" rx="0.8" fill="#F8DA84" stroke="#D3AF5C"/>
<rect x="7.3" y="1.3" width="2.8" height="1.3" fill="#FFFFFF"/>
<rect x="10" y="1.3" width="2.3" height="1.3" rx="0.6" fill="#2E86F2"/>
<rect x="1" y="10.5" width="12" height="1.5" fill="#EFCB6A"/>
</g></svg>
<div class="t" style="left:529px;top:135px;letter-spacing:-0.900px;">NTFS</div>
<svg style="left:512px;top:155px" width="13" height="15" viewBox="0 0 13 15"><path d="M0.5 0.5 H9.2 L12.5 3.8 V14.5 H0.5 Z" fill="#fff" stroke="#9A9A9A"/><path d="M9 0.5 V4 H12.5" fill="#E8E8E8" stroke="#B0B0B0" stroke-width="0.8"/><rect x="3" y="4" width="2" height="2" fill="#101020"/><rect x="3" y="7" width="2" height="2" fill="#8080B0"/><rect x="3" y="10" width="2" height="2" fill="#101020"/><rect x="6" y="5" width="4" height="1" fill="#7070A0"/><rect x="6" y="8" width="4" height="1" fill="#7070A0"/><rect x="6" y="11" width="4" height="1" fill="#7070A0"/></svg>
<div class="t" style="left:529px;top:154px;">Disable delete notifications on all volumes</div>
<svg style="left:512px;top:174px" width="16" height="15" viewBox="0 0 16 15"><path d="M0.5 0.5 H9.2 L12.5 3.8 V14.5 H0.5 Z" fill="#fff" stroke="#9A9A9A"/><path d="M9 0.5 V4 H12.5" fill="#E8E8E8" stroke="#B0B0B0" stroke-width="0.8"/><rect x="3" y="4" width="2" height="2" fill="#101020"/><rect x="3" y="7" width="2" height="2" fill="#8080B0"/><rect x="3" y="10" width="2" height="2" fill="#101020"/><rect x="6" y="5" width="4" height="1" fill="#7070A0"/><rect x="6" y="8" width="4" height="1" fill="#7070A0"/><rect x="6" y="11" width="4" height="1" fill="#7070A0"/><circle cx="10" cy="9.7" r="4.6" fill="#fff" stroke="#505050" stroke-width="1"/><path d="M10 6.5 V11.5 M7.6 9.4 L10 12 L12.4 9.4" fill="none" stroke="#1A1A1A" stroke-width="1.6"/></svg>
<div class="t" style="left:529px;top:173px;letter-spacing:-0.127px;">Enable Win32 long paths</div>
<svg style="left:512px;top:193px" width="13" height="15" viewBox="0 0 13 15"><path d="M0.5 0.5 H9.2 L12.5 3.8 V14.5 H0.5 Z" fill="#fff" stroke="#9A9A9A"/><path d="M9 0.5 V4 H12.5" fill="#E8E8E8" stroke="#B0B0B0" stroke-width="0.8"/><rect x="3" y="4" width="2" height="2" fill="#101020"/><rect x="3" y="7" width="2" height="2" fill="#8080B0"/><rect x="3" y="10" width="2" height="2" fill="#101020"/><rect x="6" y="5" width="4" height="1" fill="#7070A0"/><rect x="6" y="8" width="4" height="1" fill="#7070A0"/><rect x="6" y="11" width="4" height="1" fill="#7070A0"/></svg>
<div class="t" style="left:529px;top:192px;letter-spacing:-0.080px;">Selectively allow the evaluation of a symbolic link</div>
</div>
<div class="a" style="left:751px;top:85px;width:1px;height:495px;background:#E3E3E3;"></div>
<div class="a" style="left:752px;top:83px;width:1px;height:498px;background:#fff;"></div>
<div class="a" style="left:507px;top:563px;width:244px;height:16px;background:#F0F0F0;"></div>
<div class="a" style="left:524px;top:563px;width:79px;height:15px;background:#CDCDCD;"></div>
<svg style="left:510px;top:566px" width="8" height="10" viewBox="0 0 8 10"><polyline points="6,1.2 2.3,4.5 6,7.8" fill="none" stroke="#606060" stroke-width="2"/></svg>
<svg style="left:739px;top:566px" width="8" height="10" viewBox="0 0 8 10"><polyline points="1.5,1.2 5.2,4.5 1.5,7.8" fill="none" stroke="#606060" stroke-width="2"/></svg>
<div class="a" style="left:293px;top:581px;width:460px;height:19px;background:#F0F0F0;"></div>
<div class="a" style="left:293px;top:581px;width:460px;height:1px;background:#696969;"></div>
<svg style="left:290px;top:578px" width="465" height="24" viewBox="290 578 465 24"><path d="M357 581.5 L366.5 599.5 H419.2 L426.5 581.5" fill="#F0F0F0" stroke="none"/><path d="M357 581.5 L366.5 599.5 M419.2 599.5 L426.5 581.5" fill="none" stroke="#505050" stroke-width="1"/><path d="M366.5 599.5 H419.2" fill="none" stroke="#A8A8A8" stroke-width="1"/><path d="M294 580 L301.8 599.5 H356.8 L364.2 580 Z" fill="#FFFFFF"/><path d="M294 580.5 L301.8 599.5 M356.8 599.5 L364.2 581" fill="none" stroke="#4A4A4A" stroke-width="1"/><path d="M301.8 599.5 H356.8" fill="none" stroke="#828282" stroke-width="1"/></svg>
<div class="a" style="left:295px;top:579px;width:456px;height:1px;background:#E3E3E3;"></div>
<div class="t" style="left:305px;top:582px;letter-spacing:-0.260px;">Extended</div>
<div class="t" style="left:369px;top:582px;letter-spacing:-0.130px;">Standard</div>
<div class="a" style="left:1px;top:600px;width:752px;height:1px;background:#D7D7D7;"></div>
<div class="a" style="left:532px;top:602px;width:1px;height:20px;background:#D9D9D9;"></div>
<div class="a" style="left:665px;top:602px;width:1px;height:20px;background:#D9D9D9;"></div>
<div class="a" style="left:750px;top:602px;width:1px;height:20px;background:#D9D9D9;"></div>
<div class="t" style="left:3px;top:604px;">3 setting(s)</div>
<svg style="left:277px;top:17px" width="16" height="22" viewBox="0 0 16 22"><path d="M1.5 1.3 V17.5 L5.1 14 L7.9 19.6 L10.2 18.6 L7.5 13 L12.5 13 Z" fill="#fff" stroke="#000" stroke-width="1" stroke-linejoin="miter"/></svg>
</body></html>
